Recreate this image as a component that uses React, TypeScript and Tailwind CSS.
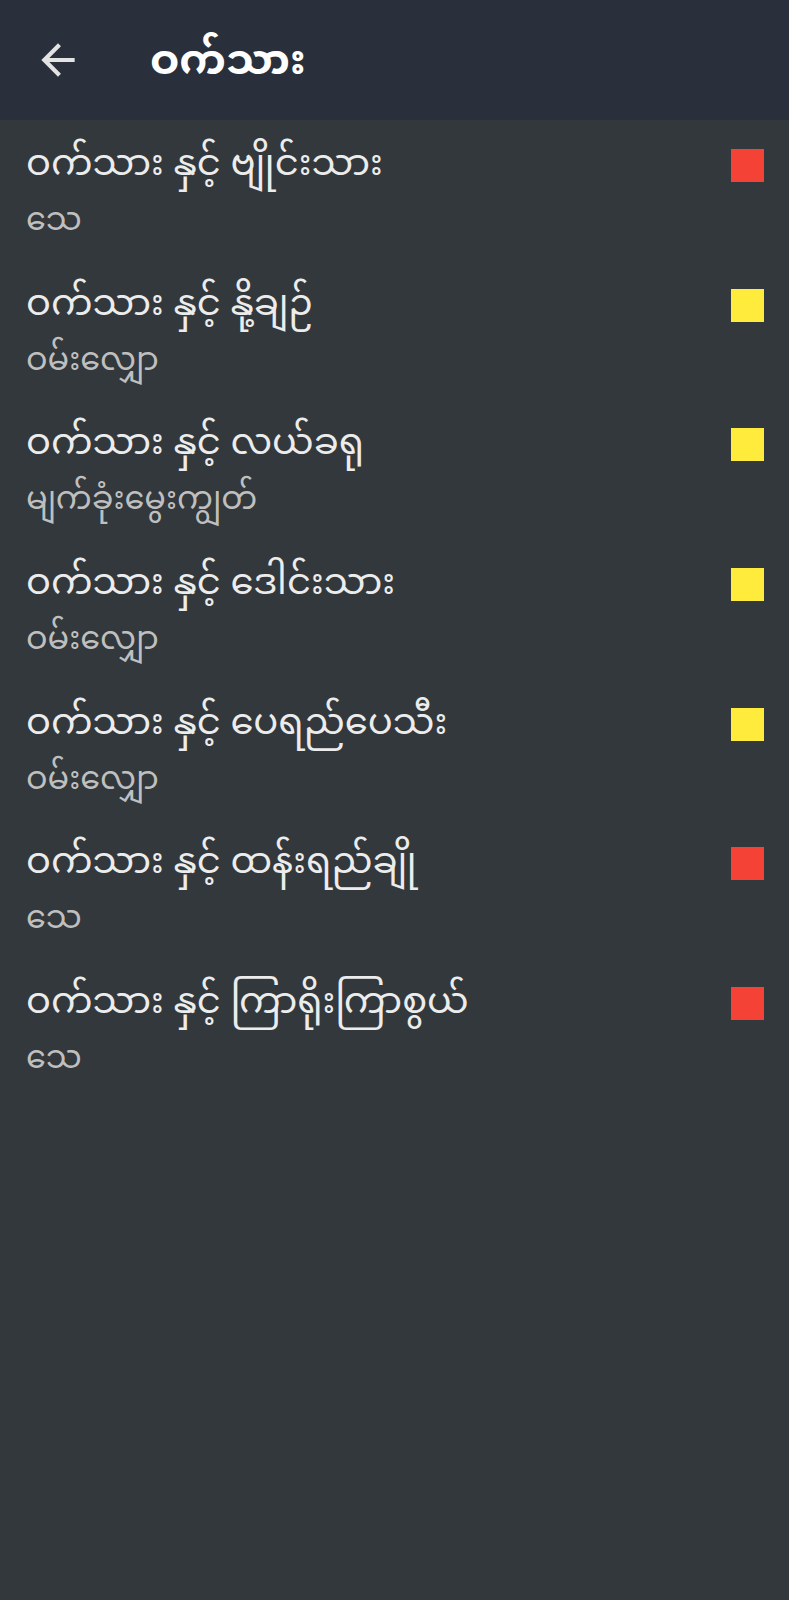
import React from "react";

const items = [
  { t: "ဝက်သား နှင့် ဗျိုင်းသား", s: "သေ", c: "red" },
  { t: "ဝက်သား နှင့် နို့ချဉ်", s: "ဝမ်းလျှော", c: "yellow" },
  { t: "ဝက်သား နှင့် လယ်ခရု", s: "မျက်ခုံးမွေးကျွတ်", c: "yellow" },
  { t: "ဝက်သား နှင့် ဒေါင်းသား", s: "ဝမ်းလျှော", c: "yellow" },
  { t: "ဝက်သား နှင့် ပေရည်ပေသီး", s: "ဝမ်းလျှော", c: "yellow" },
  { t: "ဝက်သား နှင့် ထန်းရည်ချို", s: "သေ", c: "red" },
  { t: "ဝက်သား နှင့် ကြာရိုးကြာစွယ်", s: "သေ", c: "red" },
];

export default function App() {
  return (
    <div
      className="w-[789px] h-[1600px] bg-[#32383b] flex flex-col"
      style={{ fontFamily: '"Noto Sans Myanmar", "Noto Sans", "DejaVu Sans", sans-serif' }}
    >
      <div className="h-[120px] bg-[#29303b] flex items-center shrink-0">
        <div className="w-[150px] pl-[33px] flex items-center">
          <svg width="50" height="50" viewBox="0 0 24 24" fill="#e3e3e3">
            <path d="M20 11H7.83l5.59-5.59L12 4l-8 8 8 8 1.41-1.41L7.83 13H20v-2z" />
          </svg>
        </div>
        <div className="text-white font-bold text-[42px] leading-[60px] mt-[7px]">ဝက်သား</div>
      </div>
      <div className="flex flex-col">
        {items.map((it, i) => (
          <div key={i} className="h-[139.7px] flex items-start pl-[26px] pr-[25px]">
            <div className="flex-1 flex flex-col pt-[21px]">
              <div className="text-[#ececec] text-[37px] leading-[52px]">{it.t}</div>
              <div className="text-[#bfbfbf] text-[32px] leading-[44px] mt-[8px]">{it.s}</div>
            </div>
            <div
              className={
                "w-[33px] h-[33px] mt-[29px] " +
                (it.c === "red" ? "bg-[#f44336]" : "bg-[#ffeb3b]")
              }
            />
          </div>
        ))}
      </div>
    </div>
  );
}
